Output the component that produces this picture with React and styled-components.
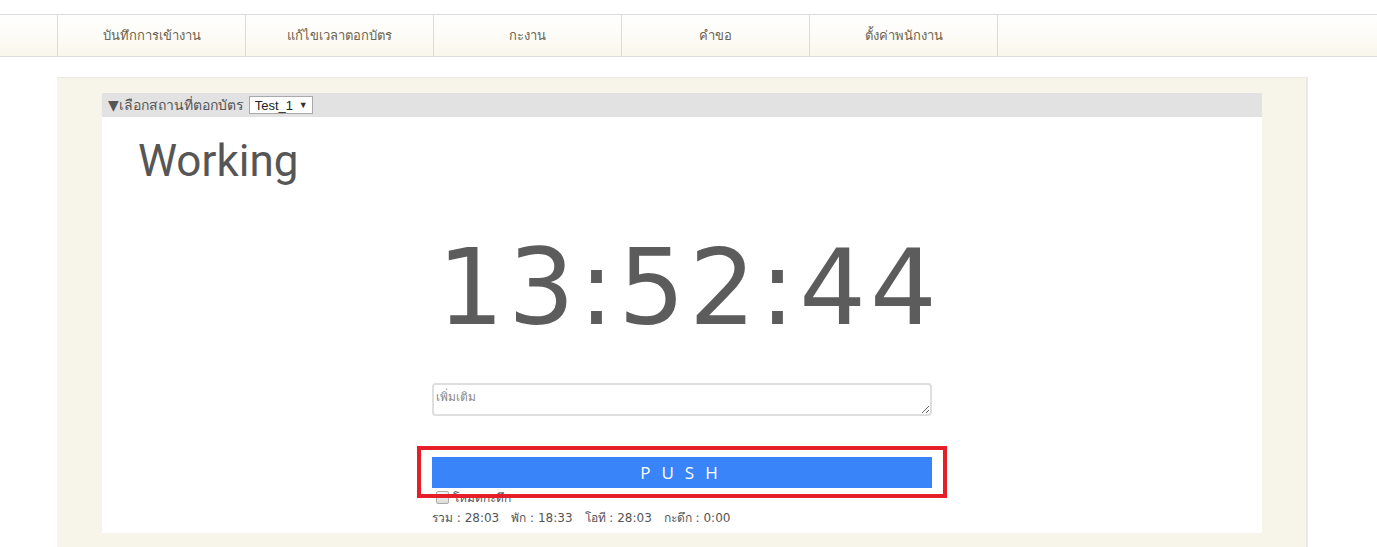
import React from "react";
import styled, { createGlobalStyle } from "styled-components";

const GlobalStyle = createGlobalStyle`
  html, body { margin: 0; padding: 0; background: #ffffff; }
  body {
    font-family: Tahoma, "DejaVu Sans", "Noto Sans", sans-serif;
    color: #555555;
  }
`;

const TopNav = styled.nav`
  margin-top: 14px;
  height: 41px;
  border-top: 1px solid #dcdcdc;
  border-bottom: 1px solid #dcdcdc;
  background: linear-gradient(to bottom, #fefefd 0%, #fdfcf8 45%, #faf6eb 100%);
  display: flex;
  padding-left: 57px;
`;

const NavItem = styled.a`
  width: 187px;
  border-left: 1px solid #dedbd3;
  ${(p) => (p.$last ? "border-right: 1px solid #dedbd3;" : "")}
  display: flex;
  align-items: center;
  justify-content: center;
  font-size: 13px;
  color: #6c6350;
  text-decoration: none;
  cursor: pointer;
`;

const Outer = styled.main`
  margin: 20px 0 0 57px;
  width: 1160px;
  background: #f7f4e9;
  border-top: 1px solid #ebe8df;
  border-right: 2px solid #ebe9e4;
  padding: 15px 44px 14px 45px;
`;

const SectionHeader = styled.div`
  height: 24px;
  background: #e2e2e2;
  display: flex;
  align-items: center;
  gap: 5px;
  padding-left: 6px;
  font-size: 14px;
  color: #555555;
`;

const Select = styled.div`
  box-sizing: border-box;
  display: inline-flex;
  align-items: center;
  justify-content: space-between;
  width: 64px;
  height: 18px;
  padding: 0 4px 0 5px;
  background: #ffffff;
  border: 1px solid #a9a9a9;
  font-family: "Liberation Sans", Arial, sans-serif;
  font-size: 13px;
  color: #222222;
`;

const Caret = styled.span`
  font-size: 9px;
  color: #333333;
`;

const Panel = styled.section`
  background: #ffffff;
  padding: 18px 0 6px 0;
`;

const Title = styled.h1`
  margin: 0 0 0 36px;
  font-family: Roboto, "Open Sans", sans-serif;
  font-weight: 400;
  font-size: 44px;
  line-height: 52px;
  color: #565656;
`;

const Clock = styled.div`
  margin-top: 46px;
  text-align: center;
  font-family: Tahoma, "DejaVu Sans", sans-serif;
  font-size: 105px;
  line-height: 110px;
  letter-spacing: 4px;
  color: #5c5c5c;
  padding-left: 14px;
`;

const Form = styled.div`
  width: 500px;
  margin: 40px auto 0 auto;
  display: flex;
  flex-direction: column;
`;

const Note = styled.textarea`
  box-sizing: border-box;
  width: 500px;
  height: 33px;
  border: 2px solid #dedede;
  border-radius: 4px;
  padding: 2px 2px;
  font-family: Tahoma, "DejaVu Sans", sans-serif;
  font-size: 12px;
  resize: vertical;
  outline: none;
  &::placeholder { color: #8a8a8a; }
`;

const ButtonWrap = styled.div`
  position: relative;
  margin-top: 41px;
`;

const PushButton = styled.button`
  width: 500px;
  height: 31px;
  border: none;
  background: #3884f8;
  color: #ffffff;
  font-family: "Open Sans", "Noto Sans", sans-serif;
  font-size: 17px;
  letter-spacing: 11px;
  padding-left: 11px;
  cursor: pointer;
`;

const Highlight = styled.div`
  position: absolute;
  left: -15px;
  top: -11px;
  width: 522px;
  height: 44px;
  border: 4px solid #e61e28;
  pointer-events: none;
  z-index: 2;
`;

const CheckRow = styled.label`
  display: flex;
  align-items: center;
  gap: 4px;
  margin: 3px 0 0 4px;
  font-size: 12px;
  color: #555555;
  height: 13px;
`;

const Check = styled.span`
  width: 11px;
  height: 11px;
  border: 1px solid #aaaaaa;
  border-radius: 2px;
  background: linear-gradient(#f5f5f5, #dddddd);
`;

const Stats = styled.div`
  margin-top: 4px;
  font-size: 12px;
  color: #555555;
  display: flex;
  gap: 12px;
  white-space: nowrap;
`;

const navItems = ["บันทึกการเข้างาน", "แก้ไขเวลาตอกบัตร", "กะงาน", "คำขอ", "ตั้งค่าพนักงาน"];
const stats = [
  ["รวม", "28:03"],
  ["พัก", "18:33"],
  ["โอที", "28:03"],
  ["กะดึก", "0:00"],
];

export default function App() {
  return (
    <>
      <GlobalStyle />
      <TopNav>
        {navItems.map((t, i) => (
          <NavItem key={t} $last={i === navItems.length - 1}>{t}</NavItem>
        ))}
      </TopNav>
      <Outer>
        <SectionHeader>
          <span>▼เลือกสถานที่ตอกบัตร</span>
          <Select>
            Test_1 <Caret>▼</Caret>
          </Select>
        </SectionHeader>
        <Panel>
          <Title>Working</Title>
          <Clock>13:52:44</Clock>
          <Form>
            <Note placeholder="เพิ่มเติม" />
            <ButtonWrap>
              <PushButton>PUSH</PushButton>
              <Highlight />
            </ButtonWrap>
            <CheckRow>
              <Check />
              <span>โหมดกะดึก</span>
            </CheckRow>
            <Stats>
              {stats.map(([k, v]) => (
                <span key={k}>{k} : {v}</span>
              ))}
            </Stats>
          </Form>
        </Panel>
      </Outer>
    </>
  );
}
